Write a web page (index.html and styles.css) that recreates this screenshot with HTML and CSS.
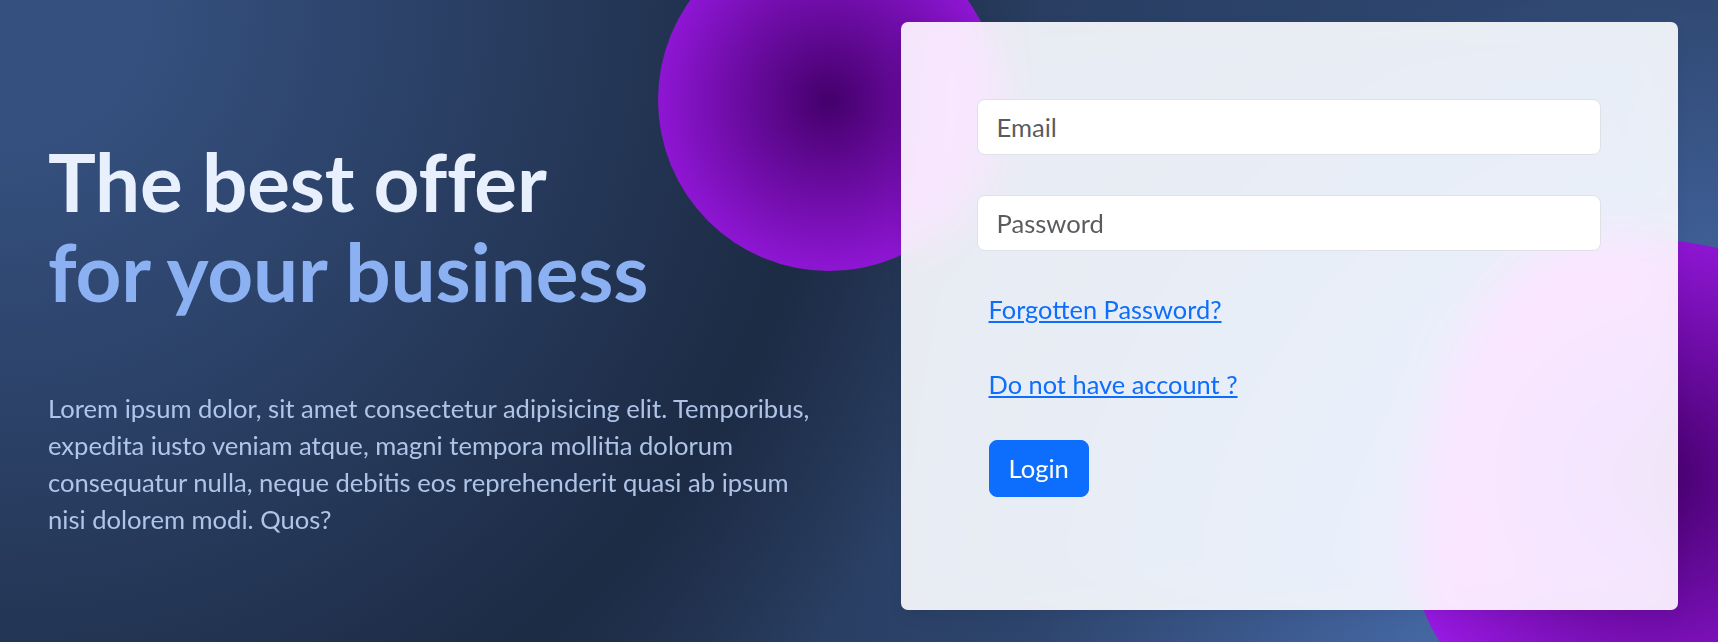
FILE: index.html
```html
<!DOCTYPE html>
<html lang="en">
<head>
<meta charset="utf-8">
<title>Login</title>
<link rel="stylesheet" href="styles.css">
</head>
<body>
<section class="hero">
  <div class="intro">
    <h1 class="title">The best offer<br><span class="title-accent">for your business</span></h1>
    <p class="lead">Lorem ipsum dolor, sit amet consectetur adipisicing elit. Temporibus,<br>expedita iusto veniam atque, magni tempora mollitia dolorum<br>consequatur nulla, neque debitis eos reprehenderit quasi ab ipsum<br>nisi dolorem modi. Quos?</p>
  </div>
  <div class="card-wrap">
    <div class="shape shape-1"></div>
    <div class="shape shape-2"></div>
    <div class="card">
      <form class="form">
        <input class="field field-email" type="email" placeholder="Email">
        <input class="field field-password" type="password" placeholder="Password">
        <a class="link link-forgot" href="#">Forgotten Password?</a>
        <a class="link link-signup" href="#">Do not have account ?</a>
        <button class="btn" type="button">Login</button>
      </form>
    </div>
  </div>
</section>
</body>
</html>
```
FILE: styles.css
```css
html, body {
  margin: 0;
  height: 100%;
}

body {
  overflow: hidden;
  font-family: Lato, "Noto Sans", sans-serif;
  background-color: hsl(218, 41%, 15%);
  background-image:
    radial-gradient(1040px circle at 0% 0%, hsl(218, 41%, 35%) 15%, hsl(218, 41%, 30%) 35%, hsl(218, 41%, 20%) 75%, hsl(218, 41%, 19%) 80%, transparent 100%),
    radial-gradient(2000px circle at 100% 100%, hsl(218, 41%, 45%) 15%, hsl(218, 41%, 30%) 35%, hsl(218, 41%, 20%) 75%, hsl(218, 41%, 19%) 80%, transparent 100%);
}

.hero {
  display: flex;
  align-items: center;
  height: 642px;
  box-sizing: border-box;
  padding: 22px 40.5px 32px 48px;
  overflow: hidden;
}

.intro {
  flex: 1;
  min-width: 0;
}

.title {
  margin: 80px 0 74px;
  font-size: 80px;
  line-height: 90px;
  font-weight: 700;
  letter-spacing: -0.002em;
  color: hsl(218, 81%, 95%);
}

.title-accent {
  color: hsl(218, 81%, 75%);
}

.lead {
  margin: 0 0 38px;
  font-size: 25.6px;
  line-height: 37px;
  color: hsl(218, 81%, 86%);
  opacity: 0.9;
  white-space: nowrap;
}

.card-wrap {
  position: relative;
  flex: none;
  width: 777px;
  height: 588px;
}

.shape {
  position: absolute;
  background: radial-gradient(#44006b, #ad1fff);
  overflow: hidden;
}

.shape-1 {
  left: -243px;
  top: -93px;
  width: 342px;
  height: 342px;
  border-radius: 50%;
}

.shape-2 {
  left: 514px;
  top: 214px;
  width: 480px;
  height: 480px;
  border-radius: 38% 62% 63% 37% / 70% 33% 67% 33%;
}

.card {
  position: relative;
  z-index: 1;
  height: 100%;
  box-sizing: border-box;
  padding: 77px 77px 77px 76px;
  border-radius: 7px;
  background-color: hsla(0, 0%, 100%, 0.9);
  backdrop-filter: saturate(200%) blur(25px);
  box-shadow: 0 2px 15px -3px rgba(0, 0, 0, 0.07), 0 10px 20px -2px rgba(0, 0, 0, 0.04);
}

.form {
  display: flex;
  flex-direction: column;
  align-items: flex-start;
  margin: 0;
}

.field {
  display: block;
  width: 100%;
  height: 56px;
  box-sizing: border-box;
  padding: 0 19px;
  border: 1px solid #dee2e6;
  border-radius: 8px;
  background: #fff;
  font-family: inherit;
  font-size: 25.6px;
  color: #212529;
  outline: none;
}

.field::placeholder {
  color: rgba(33, 37, 41, 0.75);
}

.field-email {
  margin-bottom: 40px;
}

.field-password {
  margin-bottom: 39.4px;
}

.link {
  display: block;
  margin-left: 12px;
  font-size: 25.4px;
  line-height: 38px;
  color: #0d6efd;
  text-decoration: underline;
}

.link-forgot {
  margin-bottom: 37px;
}

.link-signup {
  margin-bottom: 36.6px;
}

.btn {
  margin-left: 12px;
  height: 57px;
  padding: 0 19px;
  border: 1px solid #0d6efd;
  border-radius: 8px;
  background: #0d6efd;
  color: #fff;
  font-family: inherit;
  font-size: 25.6px;
  line-height: 38px;
  cursor: pointer;
}
```
